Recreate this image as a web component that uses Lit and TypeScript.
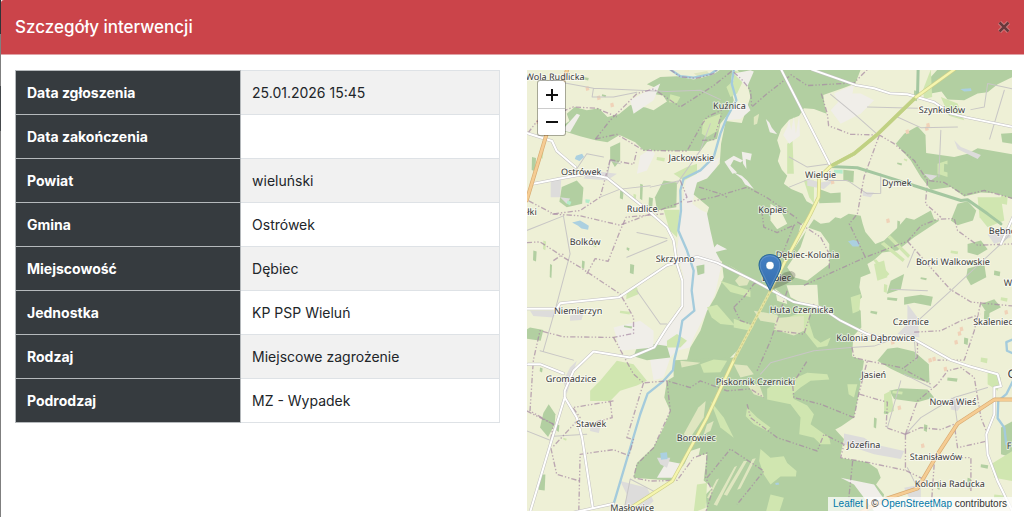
import { LitElement, html, svg, css } from "lit";
import { customElement, state } from "lit/decorators.js";

type Row = { label: string; value: string };
type Place = [string, number, number];

const ROWS: Row[] = [
  { label: "Data zgłoszenia", value: "25.01.2026 15:45" },
  { label: "Data zakończenia", value: "" },
  { label: "Powiat", value: "wieluński" },
  { label: "Gmina", value: "Ostrówek" },
  { label: "Miejscowość", value: "Dębiec" },
  { label: "Jednostka", value: "KP PSP Wieluń" },
  { label: "Rodzaj", value: "Miejscowe zagrożenie" },
  { label: "Podrodzaj", value: "MZ - Wypadek" },
];

// Label centres on the map canvas.
const PLACES: Place[] = [
  ["Wola Rudlicka", 28, 10],
  ["Kuźnica", 202, 39],
  ["Szynkielów", 414, 43],
  ["Jackowskie", 164, 91],
  ["Ostrówek", 54, 105],
  ["Wielgie", 293, 108],
  ["Dymek", 369, 116],
  ["Rudlice", 115, 142],
  ["łki", 5, 145],
  ["Kopiec", 245, 143],
  ["Bębnów", 478, 164],
  ["Bolków", 58, 175],
  ["Skrzynno", 148, 192],
  ["Dębiec-Kolonia", 280, 188],
  ["Borki Walkowskie", 425, 195],
  ["Dębiec", 249, 211],
  ["Wierzbie", 494, 216],
  ["Niemierzyn", 51, 244],
  ["Huta Czernicka", 274, 243],
  ["Czernice", 383, 255],
  ["Skaleniec", 465, 255],
  ["Kolonia Dąbrowice", 348, 271],
  ["Gromadzice", 44, 312],
  ["Piskornik Czernicki", 228, 315],
  ["Jasień", 346, 308],
  ["Nowa Wieś", 425, 335],
  ["Stawek", 64, 357],
  ["Borowiec", 169, 371],
  ["Józefina", 336, 378],
  ["F", 481, 379],
  ["Stanisławów", 408, 390],
  ["Kolonia Raducka", 422, 417],
  ["Masłowice", 105, 441],
];

const FOREST = [
  "M470 38L520 48 580 32 600 18 636 18 630 70 640 110 624 150 600 180 590 225 560 235 540 262 370 260 345 236 298 214 262 236 226 230 180 218 130 202 122 190 148 172 140 150 164 130 200 140 236 134 262 160 296 152 330 124 376 132 400 140 440 114 428 96 392 90 404 72 380 62 420 40Z",
  "M650 18L1020 18 1004 60 966 74 908 94 912 126 918 150 880 136 850 134 836 156 806 168 782 196 770 230 780 262 772 292 784 318 800 336 790 360 812 376 846 390 858 412 880 424 872 456 840 484 820 560 780 640 745 672 700 650 640 612 600 590 584 560 570 500 560 450 566 430 520 392 530 356 560 344 598 300 602 240 616 172 664 178 690 100 680 60Z",
  "M745 672L700 650 604 590 610 640 584 700 560 740 540 800 510 850 500 888 520 920 610 900 670 840 735 720Z",
  "M880 466L900 480 926 476 944 460 960 464 984 450 1020 456 1026 480 1034 504 1064 540 1090 530 1130 492 1156 462 1180 468 1230 440 1240 466 1256 470 1180 520 1130 560 1085 566 1060 588 1040 600 1050 628 1020 640 1016 670 1024 700 1000 722 1020 740 1022 790 998 816 994 876 1030 890 1014 990 1000 1060 962 1086 944 1096 970 1124 958 1180 1040 1194 1070 1214 1080 1240 1066 1260 1090 1290 1080 1344 560 1344 556 1290 576 1270 550 1248 560 1168 510 1180 450 1248 340 1240 350 1196 400 1148 430 1090 450 1040 432 1000 440 950 460 938 460 888 640 880 700 740 745 672 790 600Z",
  "M1230 40L1250 18 1476 18 1476 40 1430 62 1400 86 1370 90 1330 110 1280 108 1262 84 1230 90Z",
  "M1125 240L1150 210 1190 188 1214 214 1216 268 1300 280 1340 270 1370 254 1476 272 1476 406 1424 388 1380 386 1330 398 1290 370 1230 378 1200 340 1170 290Z",
  "M1310 420L1340 412 1366 440 1356 470 1310 484 1290 470Z",
  "M1340 540L1380 530 1400 556 1370 574 1340 566Z",
  "M1100 854L1130 850 1180 862 1224 900 1226 956 1160 938 1110 914 1070 890Z",
  "M1106 980L1140 972 1220 976 1240 1000 1190 1014 1120 1004Z",
  "M125 370L170 350 190 372 186 420 140 430 118 414Z",
  "M30 790L70 798 62 830 20 824 20 796Z",
  "M86 1020L106 1050 104 1080 84 1118 60 1090 70 1046Z",
  "M430 350L470 356 468 430 410 440 404 400Z",
  "M350 850L400 840 440 846 450 880 380 888 340 876Z",
  "M1340 614L1390 600 1396 640 1350 664 1336 640Z",
  "M1150 700L1200 692 1236 698 1230 726 1180 716 1150 722Z",
  "M270 250L300 236 300 290 284 310 270 286Z",
  "M968 318L1000 322 998 356 968 350Z",
  "M892 374L930 388 960 386 960 416 896 418Z",
  "M1110 650L1150 630 1140 676 1098 690Z",
  "M1440 210L1474 208 1474 240 1444 236Z",
  "M60 1230L76 1230 74 1278 56 1276Z",
  "M528 606L552 602 552 628 532 634Z",
  "M1440 1090L1476 1070 1476 1180 1440 1170Z",
  "M1380 720L1420 706 1440 730 1400 750Z",
];

const CLEARING = [
  "M860 490L900 504 926 540 926 600 900 620 860 650 820 640 800 610 840 550Z",
  "M798 664L890 662 894 724 860 726 810 700Z",
  "M764 674L796 700 800 720 770 710Z",
  "M750 420L780 440 800 480 770 496 750 470Z",
  "M510 1160L540 1150 520 1240 470 1248Z",
];

const MEADOW = [
  "M450 92L480 100 470 118 446 116Z",
  "M640 20L668 30 664 60 650 90 630 100 618 70 640 50Z",
  "M548 170L600 150 594 200 560 220 544 210Z",
  "M460 330L500 310 530 300 530 330 490 350Z",
  "M430 438L478 438 470 520 448 500Z",
  "M600 650L690 680 690 700 630 684Z",
  "M560 730L590 722 644 784 600 780 574 760Z",
  "M640 764L700 784 690 800 640 790Z",
  "M210 980L240 950 290 890 340 900 380 950 350 964 300 980 270 1010 210 1010Z",
  "M320 680L350 670 356 690 318 706Z",
  "M440 830L470 810 500 830 480 850 440 850Z",
  "M740 974L760 960 810 960 820 944 860 926 920 930 926 946 870 950 840 970 816 990 820 1004 860 1024 880 1050 870 1080 926 1120 930 1140 900 1140 880 1120 836 1110 840 1060 810 1020 740 1006Z",
  "M720 1154L750 1180 790 1176 800 1196 828 1220 826 1236 780 1236 750 1260 730 1230 716 1190Z",
  "M750 1290L790 1300 776 1344 736 1344Z",
  "M800 760L830 750 846 730 870 740 864 770 880 820 900 836 930 820 920 846 890 850 850 800 800 800Z",
  "M680 1030L710 1060 750 1090 740 1100 700 1080 676 1056Z",
  "M540 900L580 886 620 890 600 924 550 926Z",
  "M980 960L1010 960 1000 1000 984 990Z",
  "M990 700L1020 690 1016 740 996 748Z",
  "M1230 18L1234 100 1210 106 1206 80Z",
  "M1260 100L1310 120 1330 170 1284 156Z",
  "M1250 300L1280 290 1280 340 1250 330Z",
  "M1400 920L1440 940 1430 980 1400 960Z",
  "M1410 1200L1474 1160 1474 1250 1420 1240Z",
  "M800 240L816 230 820 330 800 330Z",
  "M850 350L880 350 880 420 866 400Z",
  "M1060 600L1090 590 1100 640 1070 650Z",
  "M1370 400L1440 400 1450 470 1400 490 1376 460Z",
  "M570 1010L610 1060 640 1120 600 1090Z",
  "M1090 990L1110 980 1120 1040 1090 1050Z",
  "M530 1260L560 1256 556 1330 520 1344Z",
];

const BARE = [
  "M330 110L420 60 400 110 340 150Z",
  "M126 200L170 150 180 154 150 206Z",
  "M640 130L680 120 690 140 660 166 620 170Z",
  "M496 350L560 300 600 280 580 330 530 360 516 420 540 438 566 450 578 540 604 600 584 690 560 740 520 820 508 850 470 860 450 880 430 940 400 948 390 890 400 850 490 730 490 640 470 560 480 480Z",
  "M360 276L390 256 404 270 380 320 350 330Z",
  "M976 90L1020 90 1060 110 1020 150 960 180 930 140Z",
  "M280 790L360 770 400 800 400 850 300 860Z",
  "M440 1190L490 1200 470 1240 410 1240Z",
  "M960 1240L1000 1260 1060 1340 1120 1340 1080 1290 1060 1260Z",
  "M640 30L690 20 700 24 680 70 660 50Z",
  "M940 90L966 78 1000 64 990 120 960 130Z",
];

// Sparse sandy strips cut into the woods.
const SAND = [
  "M612 294L640 276 668 290 660 296 640 288 630 306 650 326 636 330Z",
  "M664 264L694 270 690 290 676 286 678 316 668 300Z",
  "M640 326L664 336 680 350 700 376 674 362 664 346Z",
  "M736 166L746 176 754 192 770 212 748 206Z",
  "M800 190L806 168 812 200 820 160 826 210 836 154 838 216 806 240 788 214Z",
  "M556 444L574 560 590 540 620 556 580 566Z",
];

const FIELD_IN_FOREST = [
  "M644 650L660 632 690 642 680 664 656 666Z",
  "M700 740L770 752 780 780 720 770Z",
  "M766 762L850 756 850 800 820 814 760 796Z",
  "M640 900L680 904 700 930 660 940Z",
  "M534 1030L556 1010 550 1060 510 1120 490 1110Z",
  "M480 890L540 896 530 900 484 910Z",
  "M560 1080L580 1070 570 1100 550 1110Z",
  "M520 30L560 22 570 34 540 44Z",
  "M680 960L716 960 730 1000 700 990Z",
  "M700 160L716 150 710 180 700 184Z",
];

const BUILT = [
  "M92 348L124 340 120 400 92 400Z",
  "M300 1250L380 1270 400 1310 360 1344 310 1344 320 1290Z",
  "M1160 720L1190 760 1196 820 1130 810 1160 780Z",
  "M970 1108L1030 1120 1060 1140 1150 1160 1140 1184 1060 1170 970 1140Z",
  "M410 1180L450 1180 440 1210 420 1200Z",
  "M130 950L150 910 170 890 140 990Z",
  "M210 320L290 330 260 350 190 344Z",
  "M860 346L900 356 940 350 910 376 860 366Z",
  "M1300 230L1320 250 1380 274 1370 286 1310 256Z",
  "M1290 1000L1330 1010 1310 1040 1290 1036Z",
  "M1150 1270L1200 1260 1200 1310 1170 1310Z",
  "M1400 512L1460 490 1470 520 1420 540Z",
  "M30 740L110 740 100 760 40 756Z",
  "M210 1080L240 1090 236 1106 210 1100Z",
  "M1210 330L1250 336 1230 350Z",
  "M1026 384L1060 386 1050 400 1026 396Z",
  "M150 754L190 748 184 768 150 770Z",
  "M120 400L150 404 140 420Z",
];

const BORDERS = [
  "M450 18L480 40 530 44 580 30 590 18M226 226L270 170 350 90 400 76 480 130 580 66 640 18M640 26L666 50 690 80 694 130 740 90 812 34 860 66 1000 58 1040 18",
  "M226 226L290 212 370 260 500 262 540 190 560 160 624 130M545 230L580 228 604 150M270 288L340 302 350 260M270 288L240 400 180 440 100 450 24 410",
  "M24 208L50 174 160 130 230 134 290 160M480 350L500 400 480 416 400 446 300 484 180 456 90 450",
  "M500 415L580 400 680 370 740 402 830 464M536 370L600 390 620 400",
  "M902 90L920 150 924 186 990 212 1076 214 1120 240 1180 290 1220 350 1270 356 1330 394 1390 380 1476 404M1076 214L1030 340 1010 450 986 480 1010 530 1034 580M1220 350L1214 420 1260 460",
  "M20 536L60 534 110 566 130 580 180 610 270 670 300 690 340 760 340 808 280 820 130 818 60 800 40 888 30 1040 100 1080 90 1140 110 1230 180 1250",
  "M200 630L225 584 264 592 300 500 318 460 430 450M100 590L130 570",
  "M850 664L1034 580 1160 532 1200 486 1250 466 1300 464 1310 500 1370 544 1476 540M1160 532L1220 600 1288 676 1350 714 1476 726M1380 714L1360 800 1330 888 1250 888",
  "M994 850L1000 880 1040 890 1014 990 1000 1060M1180 804L1260 800 1320 770 1380 750M1190 830L1190 880 1150 910M1040 890L1140 910 1230 960",
  "M280 820L340 930 370 956 440 950 510 970 540 950 620 980 690 974 730 1000",
  "M370 956L320 1120 340 1126 326 1174 280 1156 180 1170 176 1344M280 1010L158 1030 180 1060 100 1146M270 1010L276 1060 200 1080",
  "M440 950L450 1040 400 1150 350 1200 340 1240 390 1250 470 1248 520 1180 560 1166 556 1240 576 1280 556 1344M560 1240L630 1154 730 1220 650 1320",
  "M20 1040L100 1080M680 1020L690 1060 770 1120 890 1160 910 1110 970 1140 960 1180 1050 1196 1154 1218 1220 1250M1000 1060L900 1020 820 1000 816 960 860 890",
  "M1154 1110L1190 1010 1250 960 1280 920 1320 910 1360 940 1380 1060 1400 1110M1154 1110L1200 1090 1260 1096 1300 1080 1310 1150 1400 1130M1154 1110L1154 1218M1240 1200L1230 1344M1310 1180L1350 1180 1350 1280",
  "M1016 990L1100 1014 1096 1090 1154 1110M996 1190L980 1344",
  "M800 680L750 830 710 920M640 730L670 700 700 660 730 650M640 730L660 770 690 780M770 800L850 810 880 720M820 484L790 560 760 600M830 474L900 520 926 570 926 620M724 440L730 490 770 506 830 480",
];

const MINOR = [
  "M90 50L220 74 216 100 280 100 350 86M220 74L440 84 540 80 600 108M470 360L540 260 570 180M160 330L200 270 250 280M260 340L270 290 300 300M390 370L480 350M240 400L300 376 390 366M20 500L130 456 150 570 110 720 70 860M350 506L440 524M320 580L440 530M350 680L420 780 440 780M60 860L160 888",
  "M930 92L1000 150 1070 212M1040 130L1190 134M1130 160L1200 192 1310 190M1260 200L1254 340M1350 138L1390 130 1400 60 1476 76M1450 80L1406 226M806 280L860 310 930 300M806 370L880 340M920 350L980 350 1040 390 1080 388 1080 330",
  "M1180 780L1290 680 1450 530 1476 500M1180 820L1186 888M990 850L1060 846 1130 820M1110 676L1220 680M720 930L750 896 880 860 990 850",
  "M20 1100L96 1130M200 1110L100 1116M1154 1110L1200 1060 1300 1000 1400 970M1100 1090L1140 950M1150 930L1230 970M1300 1010L1310 1080M1160 1210L1190 1270M310 1344L330 1244 400 1280M1160 610L1180 560",
];

const MAJOR_LOCAL = [
  "M20 208L96 232 110 262 166 310M40 360L120 344 200 330 260 342 390 446 440 490 460 530 470 600 486 650 486 726 440 790 402 850 330 880 220 862 160 920 134 980 134 1000 94 1130 30 1344",
  "M20 734L110 734 120 718 296 700 440 604 530 578 590 596 700 650 748 676 820 714 900 730 960 770 1040 810 1090 824 1180 826 1290 888 1350 908 1430 930 1440 966 1420 970 1420 1050 1396 1110 1400 1170 1430 1250 1476 1344",
  "M134 1000L170 1060 186 1120 218 1330M160 1344L280 1318M24 900L60 900 130 928",
  "M782 18L930 308M874 18L1004 64 1060 74 1110 90 1160 92 1240 116 1290 150 1340 162 1476 190M1476 460L1440 540",
];

const SPECKS = [
  [60, 260, 10, 22], [36, 280, 12, 40], [190, 40, 16, 8], [120, 94, 12, 4], [246, 92, 12, 6],
  [300, 380, 10, 24], [340, 390, 8, 20], [360, 360, 8, 46], [386, 400, 12, 28], [410, 280, 24, 10],
  [90, 600, 6, 40], [40, 560, 10, 30], [70, 530, 8, 26], [330, 600, 12, 28], [186, 590, 8, 22],
  [300, 740, 30, 8], [312, 784, 24, 6], [320, 550, 8, 8], [220, 540, 10, 8], [1180, 80, 10, 30],
  [1130, 296, 14, 6], [1150, 284, 10, 6], [1270, 300, 16, 24], [1330, 280, 24, 10], [1440, 396, 20, 24],
  [1130, 470, 8, 30], [1340, 590, 26, 12], [1290, 560, 22, 8], [1420, 620, 18, 14], [1390, 740, 16, 26],
  [1440, 700, 20, 10], [1060, 1060, 8, 30], [1090, 1040, 14, 8], [1116, 980, 30, 8], [1210, 1080, 10, 20],
  [1280, 940, 30, 10], [1380, 880, 20, 14], [1330, 820, 12, 20], [1380, 1200, 22, 10], [1420, 1290, 28, 12],
  [1250, 1250, 8, 24], [1340, 1240, 10, 30], [1300, 1170, 14, 8], [60, 910, 8, 12], [110, 1080, 8, 20],
  [130, 1120, 10, 6], [1100, 700, 30, 8], [1050, 740, 20, 8], [1090, 660, 10, 24], [1200, 640, 18, 6],
];

const HOUSES = [
  [270, 120], [196, 70], [230, 98], [48, 170], [1154, 200], [1212, 190], [930, 350], [1130, 1026],
  [1316, 790], [1310, 804], [1450, 740], [1200, 1140], [1222, 884], [1234, 880], [1268, 910], [1110, 830],
  [1216, 180], [1096, 466], [1300, 830],
];

const YELLOW_ROADS = [
  "M1300 18L1186 100 1070 212 1000 270 930 308 896 340 894 400 870 450 790 600 750 680",
  "M640 888L560 1060 456 1250 310 1344",
];
const ORANGE_ROADS = [
  "M144 10L104 130 20 410",
  "M1476 1006L1420 1006 1310 1078 1250 1170 1190 1272 1100 1302 1020 1344",
];

@customElement("map-canvas")
class MapCanvas extends LitElement {
  static styles = css`
    :host {
      display: block;
      height: 100%;
    }
    .canvas {
      display: block;
      width: 100%;
      height: 100%;
    }
    .land { fill: #eef0d6; }
    .forest { fill: #b2cfa1; }
    .meadow { fill: #d0e6b0; }
    .bare { fill: #f0eee9; }
    .field { fill: #dfe6c0; }
    .built { fill: #dddcdb; }
    .house { fill: #f0d2b8; }
    .water { fill: #abd0e0; }
    .line { fill: none; stroke-linejoin: round; stroke-linecap: round; }
    .river { stroke: #a4cbdc; stroke-width: 7; }
    .border { stroke: #a587a3; stroke-opacity: 0.7; stroke-width: 4; stroke-linecap: butt; stroke-dasharray: 16 6 4 6 4 6; }
    .minor { stroke: #c8c6c5; stroke-width: 3; }
    .casing { stroke: #c3c1c1; stroke-width: 9; }
    .local { stroke: #ffffff; stroke-width: 6; }
    .yellow-edge { stroke: #cfd18a; stroke-width: 11; }
    .yellow { stroke: #f5f5ae; stroke-width: 7; }
    .wooded { stroke: #bfd183; stroke-width: 10; }
    .orange-edge { stroke: #d8ab72; stroke-width: 12; }
    .orange { stroke: #f5cc93; stroke-width: 8; }
    .green-road { stroke: #a4c7a0; stroke-width: 9; }
    .sandy { stroke: #e6e3a0; stroke-width: 8; }
    .dots { stroke: #c9cc8c; stroke-width: 3; stroke-dasharray: 4 8; }
    .name {
      font: 9px "Noto Sans", sans-serif;
      text-rendering: geometricPrecision;
      fill: #3b3b3b;
      text-anchor: middle;
      paint-order: stroke;
      stroke: rgba(255, 255, 255, 0.65);
      stroke-width: 2px;
      stroke-linejoin: round;
    }
    .town {
      font-size: 12px;
    }
  `;

  render() {
    const area = (cls: string, list: string[]) => list.map((d) => svg`<path class=${cls} d=${d}></path>`);
    const line = (cls: string, list: string[]) => list.map((d) => svg`<path class="line ${cls}" d=${d}></path>`);
    return html`
      <svg class="canvas" viewBox="0 0 484 441" preserveAspectRatio="xMidYMid slice" role="img" aria-label="Mapa okolic miejscowości Dębiec">
        <rect class="land" width="484" height="441"></rect>
        <g transform="translate(-7 -6) scale(0.33333)">
          ${area("bare", BARE.slice(3, 4))}
          ${area("forest", FOREST)}
          ${area("land", CLEARING)}
          ${area("meadow", MEADOW)}
          ${area("bare", BARE.filter((_, i) => i !== 3))}
          ${area("bare", SAND)}
          ${area("field", FIELD_IN_FOREST)}
          ${area("built", BUILT)}
          ${SPECKS.map(([x, y, w, h], i) => svg`<path class=${i % 3 ? "forest" : "meadow"} d="M${x} ${y}l${w} 3 -2 ${h} -${w - 1} -4z"></path>`)}
          ${HOUSES.map(([x, y]) => svg`<path class="house" d="M${x} ${y}l9 -3 3 12 -10 3z"></path>`)}
          <g class="meadow">
            <path d="M1080 540l10 -6 62 52 -6 8zM1100 520l8 -6 60 60 -6 8zM1058 590l8 -4 40 44 -6 6z"></path>
          </g>
          <g class="field">
            <path d="M650 1276l10 -4 46 -90 -10 2zM610 1290l10 4 60 -104 -10 0zM580 1320l10 4 60 -120 -8 4zM560 1300l6 2 30 -60 -8 4z"></path>
          </g>
          <g class="water">
            <path d="M156 476L180 470 194 478 206 486 204 498 184 494 174 486zM168 276L186 270 192 280 178 292 164 286zM982 532L998 528 1018 534 1014 548 996 548zM420 1166L440 1164 442 1184 422 1186zM1318 76L1350 74 1352 82 1330 84zM764 1256l10 -2 2 6 -10 2z"></path>
          </g>
          ${line("river", [
            "M640 20L634 60 648 110 620 160 600 210 580 280 540 320 490 344 480 380 482 440 474 500 500 560 520 620 514 680 522 740 486 770 476 830 462 888 458 918 430 950 382 988 360 1050 280 1320",
            "M450 18L480 38 520 42 570 32 590 18",
            "M1476 950L1456 990 1432 1010 1430 1062 1450 1090 1456 1140",
            "M1476 826L1456 834 1458 860 1476 868",
          ])}
          ${line("minor", MINOR)}
          ${line("border", BORDERS)}
          ${line("green-road", ["M930 308L1010 312 1100 340 1200 372 1320 410 1340 408 1400 450 1440 480", "M1192 18L1190 100"])}
          ${line("casing", MAJOR_LOCAL)}
          ${line("local", MAJOR_LOCAL)}
          ${line("yellow-edge", YELLOW_ROADS)}
          ${line("yellow", YELLOW_ROADS)}
          ${line("wooded", ["M1180 106L1070 212 1000 270 936 304"])}
          ${line("sandy", ["M750 680L640 888"])}
          ${line("dots", ["M750 680L640 888"])}
          ${line("orange-edge", ORANGE_ROADS)}
          ${line("orange", ORANGE_ROADS)}
          <path d="M142 410l12 4 -4 10 -10 -4zM196 406l14 2 -4 10 -10 -2zM940 318l26 0 0 12 -26 -2z" fill="#b4ecc9"></path>
        </g>
        ${PLACES.map(([name, x, y]) => svg`<text class="name" x=${x} y=${y}>${name}</text>`)}
        <text class="name town" x="484" y="308">G</text>
        <g transform="translate(231 184)">
          <path d="M12 36L20 23Q26 17 33 17Q39 19 36 24Q31 30 12 36z" fill="#000" opacity="0.2"></path>
          <path d="M11.500 0.500C5 0.500 0.500 5.300 0.500 11.300C0.500 14.500 1.600 16.900 3.200 20L11.500 36.500L19.800 20C21.400 16.900 22.500 14.500 22.500 11.300C22.500 5.300 18 0.500 11.500 0.500z" fill="url(#pin)" stroke="#2e6c97"></path>
          <path d="M11.500 1.700C5.700 1.700 1.700 6 1.700 11.300C1.700 14.200 2.700 16.500 4.300 19.500L11.500 33.800L18.700 19.500C20.300 16.500 21.300 14.200 21.300 11.300C21.300 6 17.300 1.700 11.500 1.700z" fill="none" stroke="#fff" stroke-opacity="0.15"></path>
          <circle cx="11.500" cy="11.500" r="4" fill="#fff" stroke="#2e6c97" stroke-opacity="0.6" stroke-width="0.700"></circle>
        </g>
        <defs>
          <linearGradient id="pin" x1="0" y1="0" x2="0" y2="1">
            <stop offset="0" stop-color="#4580c4"></stop>
            <stop offset="1" stop-color="#356fae"></stop>
          </linearGradient>
        </defs>
      </svg>
    `;
  }
}

@customElement("app-root")
class AppRoot extends LitElement {
  static styles = css`
    :host {
      display: block;
      box-sizing: border-box;
      min-height: 100vh;
      padding-left: 1px;
      background: linear-gradient(#303437 0 34px, #7f7f7f 34px 86px, #45494c 86px 131px, #7f7f7f 131px);
      font-family: Inter, "Noto Sans", sans-serif;
      font-size: 14px;
      line-height: 22px;
      color: #212529;
    }
    .dialog {
      display: flex;
      flex-direction: column;
      min-height: 100vh;
      background: #fff;
    }
    .header {
      display: flex;
      align-items: center;
      justify-content: space-between;
      padding: 13px 13px 13px 14px;
      border-bottom: 1px solid #e0a2a6;
      border-top-left-radius: 3px;
      background: #cb444a;
      color: #fff;
    }
    .title {
      margin: 0;
      font-size: 17px;
      font-weight: 500;
      line-height: 28px;
    }
    .close {
      display: flex;
      padding: 0;
      border: 0;
      background: none;
      cursor: pointer;
    }
    .body {
      display: grid;
      grid-template-columns: 1fr 1fr;
      align-items: start;
      gap: 27px;
      padding: 15px 12px 6px 14px;
    }
    .details {
      width: 100%;
      border-collapse: collapse;
      table-layout: fixed;
      border: 1px solid #dee2e6;
    }
    .label,
    .value {
      height: 44px;
      box-sizing: border-box;
      padding: 10px 11px;
      border: 1px solid #dee2e6;
      text-align: left;
    }
    .label {
      width: 46.5%;
      background: #363b3f;
      border-color: #b5b9bc;
      color: #fff;
      font-weight: 700;
    }
    .row:nth-child(odd) .value {
      background: #f1f1f1;
    }
    .map {
      position: relative;
      height: 441px;
      overflow: hidden;
    }
    .zoom {
      position: absolute;
      top: 10px;
      left: 10px;
      display: flex;
      flex-direction: column;
      border: 1px solid rgba(0, 0, 0, 0.3);
      border-radius: 3px;
      background: #fff;
      background-clip: padding-box;
    }
    .step {
      display: grid;
      place-items: center;
      width: 27px;
      height: 27px;
      padding: 0;
      border: 0;
      background: none;
      cursor: pointer;
    }
    .step + .step {
      border-top: 1px solid #ccc;
    }
    .credit {
      position: absolute;
      right: 0;
      bottom: 0;
      padding: 0 5px;
      background: rgba(255, 255, 255, 0.75);
      color: #333;
      font: 10px/14px "Liberation Sans", Arial, sans-serif;
    }
    .link {
      color: #0078a8;
      text-decoration: none;
    }
  `;

  @state() private open = true;

  render() {
    if (!this.open) return html``;
    return html`
      <section class="dialog" role="dialog" aria-labelledby="title">
        <header class="header">
          <h1 class="title" id="title">Szczegóły interwencji</h1>
          <button class="close" aria-label="Zamknij" @click=${() => (this.open = false)}>
            <svg width="14" height="14" viewBox="0 0 14 14">
              <path d="M2.500 2.500L11.500 11.500M11.500 2.500L2.500 11.500" stroke="#d98a8d" stroke-width="4.200"></path>
              <path d="M2.500 2.500L11.500 11.500M11.500 2.500L2.500 11.500" stroke="#69393c" stroke-width="2.600"></path>
            </svg>
          </button>
        </header>
        <div class="body">
          <table class="details">
            <tbody>
              ${ROWS.map((r) => html`<tr class="row"><th class="label" scope="row">${r.label}</th><td class="value">${r.value}</td></tr>`)}
            </tbody>
          </table>
          <div class="map">
            <map-canvas></map-canvas>
            <div class="zoom">
              <button class="step" aria-label="Przybliż">
                <svg width="12" height="12" viewBox="0 0 12 12"><path d="M6 0V12M0 6H12" stroke="#111" stroke-width="2"></path></svg>
              </button>
              <button class="step" aria-label="Oddal">
                <svg width="12" height="12" viewBox="0 0 12 12"><path d="M0 6H12" stroke="#111" stroke-width="2"></path></svg>
              </button>
            </div>
            <div class="credit"><a class="link" href="https://leafletjs.com">Leaflet</a> | © <a class="link" href="https://www.openstreetmap.org/copyright">OpenStreetMap</a> contributors</div>
          </div>
        </div>
      </section>
    `;
  }
}
